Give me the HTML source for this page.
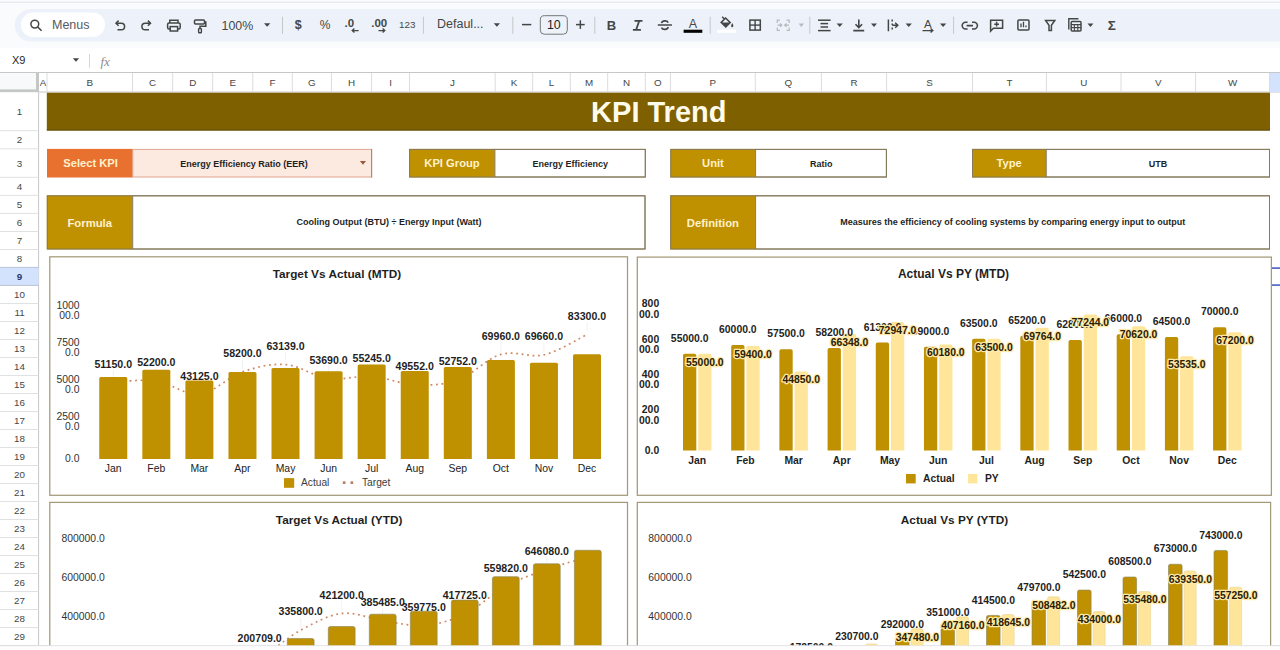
<!DOCTYPE html>
<html><head><meta charset="utf-8"><title>KPI Trend</title>
<style>
html,body{margin:0;padding:0;background:#fff;width:1280px;height:650px;overflow:hidden;}
svg{display:block;font-family:"Liberation Sans", sans-serif;}
</style></head><body>
<svg width="1280" height="650" viewBox="0 0 1280 650">
<rect x="0.00" y="0.00" width="1280.00" height="48.00" fill="#f9fbfd" />
<line x1="0.00" y1="2.20" x2="1280.00" y2="2.20" stroke="#e3e6ea" stroke-width="1" />
<path d="M31 9 H1280 V41.5 H31 A16.25 16.25 0 0 1 31 9 Z" fill="#edf2fa"/>
<rect x="21.00" y="12.50" width="84.00" height="24.50" fill="#ffffff" rx="12.25" />
<circle cx="34.8" cy="24.1" r="3.9" fill="none" stroke="#444746" stroke-width="1.5"/>
<line x1="37.70" y1="27.00" x2="41.60" y2="30.80" stroke="#444746" stroke-width="1.6" />
<text x="52.00" y="28.60" font-size="12.5" fill="#575a5e" text-anchor="start" >Menus</text>
<path d="M116 23.2 H121.3 A3.3 3.3 0 0 1 121.3 29.8 H117.5" fill="none" stroke="#444746" stroke-width="1.5"/>
<path d="M118.6 20.6 L116 23.2 L118.6 25.8" fill="none" stroke="#444746" stroke-width="1.5"/>
<path d="M150.5 23.2 H145.2 A3.3 3.3 0 0 0 145.2 29.8 H149" fill="none" stroke="#444746" stroke-width="1.5"/>
<path d="M147.9 20.6 L150.5 23.2 L147.9 25.8" fill="none" stroke="#444746" stroke-width="1.5"/>
<path d="M169.8 23 V20.2 H178 V23" fill="none" stroke="#444746" stroke-width="1.5"/>
<rect x="167.6" y="23" width="12.6" height="6" rx="1.5" fill="none" stroke="#444746" stroke-width="1.5"/>
<rect x="170.2" y="26.6" width="7.4" height="4.4" fill="#edf2fa" stroke="#444746" stroke-width="1.5"/>
<rect x="194.5" y="20" width="10" height="4" rx="1" fill="none" stroke="#444746" stroke-width="1.5"/>
<path d="M204.5 22 H205.8 V26.2 H200 V28.5" fill="none" stroke="#444746" stroke-width="1.5"/>
<rect x="198.6" y="28.5" width="2.8" height="4.2" rx="0.8" fill="none" stroke="#444746" stroke-width="1.4"/>
<text x="221.50" y="29.60" font-size="12.4" fill="#444746" text-anchor="start" >100%</text>
<path d="M264 23.2 H270.3 L267.15 26.7 Z" fill="#444746"/>
<line x1="282.50" y1="16.70" x2="282.50" y2="33.90" stroke="#c7c7c7" stroke-width="1" />
<text x="298.20" y="28.60" font-size="12.5" fill="#444746" text-anchor="middle" font-weight="bold">$</text>
<text x="325.00" y="28.60" font-size="12" fill="#444746" text-anchor="middle" >%</text>
<text x="344.60" y="27.40" font-size="11.5" fill="#444746" text-anchor="start" font-weight="bold">.0</text>
<path d="M358.6 30.6 H352.2 M354.4 28.6 L352.2 30.6 L354.4 32.6" fill="none" stroke="#444746" stroke-width="1.3"/>
<text x="371.20" y="27.40" font-size="11.5" fill="#444746" text-anchor="start" font-weight="bold">.00</text>
<path d="M378.5 30.6 H384.8 M382.6 28.6 L384.8 30.6 L382.6 32.6" fill="none" stroke="#444746" stroke-width="1.3"/>
<text x="399.00" y="27.70" font-size="9.8" fill="#444746" text-anchor="start" >123</text>
<line x1="423.40" y1="16.70" x2="423.40" y2="33.90" stroke="#c7c7c7" stroke-width="1" />
<text x="437.00" y="28.20" font-size="12.5" fill="#444746" text-anchor="start" >Defaul...</text>
<path d="M493.75 23.2 H500 L496.875 26.7 Z" fill="#444746"/>
<line x1="512.80" y1="16.70" x2="512.80" y2="33.90" stroke="#c7c7c7" stroke-width="1" />
<line x1="522.00" y1="24.60" x2="531.30" y2="24.60" stroke="#444746" stroke-width="1.5" />
<rect x="540.3" y="15.7" width="27" height="18.5" rx="4" fill="none" stroke="#747775" stroke-width="1"/>
<text x="553.80" y="29.20" font-size="12.4" fill="#1f1f1f" text-anchor="middle" >10</text>
<line x1="576.00" y1="24.60" x2="584.70" y2="24.60" stroke="#444746" stroke-width="1.5" />
<line x1="580.35" y1="20.30" x2="580.35" y2="28.90" stroke="#444746" stroke-width="1.5" />
<line x1="594.80" y1="16.70" x2="594.80" y2="33.90" stroke="#c7c7c7" stroke-width="1" />
<text x="611.40" y="30.10" font-size="13" font-weight="bold" fill="#444746" text-anchor="middle" >B</text>
<path d="M634.5 20.8 H642.5 M632.9 29.8 H640.9 M639.3 20.8 L636.1 29.8" fill="none" stroke="#444746" stroke-width="1.8"/>
<line x1="657.80" y1="25.00" x2="671.90" y2="25.00" stroke="#444746" stroke-width="1.5" />
<path d="M661.5 23.2 A3.5 2.8 0 0 1 668.2 22.6 M668.2 27.0 A3.5 2.8 0 0 1 661.5 27.6" fill="none" stroke="#444746" stroke-width="1.6"/>
<text x="693.00" y="28.40" font-size="12.5" fill="#444746" text-anchor="middle" >A</text>
<rect x="683.60" y="29.70" width="18.70" height="3.10" fill="#000000" />
<line x1="710.20" y1="16.70" x2="710.20" y2="33.90" stroke="#c7c7c7" stroke-width="1" />
<path d="M722.2 16.8 L724.4 19.0 M721.2 22.4 L725.6 18.0 L730.2 22.6 L725.8 27.0 Z" fill="none" stroke="#444746" stroke-width="1.5"/>
<path d="M721.5 22.6 H730 L725.8 26.8 Z" fill="#444746"/>
<path d="M732.2 23.0 Q733.8 25.2 733.2 26.2 A1 1 0 0 1 731.2 26.2 Q730.8 25.2 732.2 23.0 Z" fill="#444746"/>
<rect x="717.00" y="29.70" width="19.00" height="3.10" fill="#ffffff" />
<rect x="749.9" y="20.1" width="10.4" height="10.0" fill="none" stroke="#444746" stroke-width="1.5"/>
<line x1="755.10" y1="20.10" x2="755.10" y2="30.10" stroke="#444746" stroke-width="1.4" />
<line x1="749.90" y1="25.10" x2="760.30" y2="25.10" stroke="#444746" stroke-width="1.4" />
<path d="M777.3 23 V20.2 H780 M777.3 27.5 V30.3 H780 M789.2 23 V20.2 H786.5 M789.2 27.5 V30.3 H786.5 M777.5 25.2 H781.5 M780 23.5 L781.8 25.2 L780 26.9 M789 25.2 H785 M786.5 23.5 L784.7 25.2 L786.5 26.9" fill="none" stroke="#b8bbbe" stroke-width="1.3"/>
<path d="M798.6 23.4 H804 L801.3 26.9 Z" fill="#b8bbbe"/>
<line x1="809.80" y1="16.70" x2="809.80" y2="33.90" stroke="#c7c7c7" stroke-width="1" />
<line x1="818.00" y1="20.20" x2="830.60" y2="20.20" stroke="#444746" stroke-width="1.5" />
<line x1="820.50" y1="23.60" x2="828.10" y2="23.60" stroke="#444746" stroke-width="1.5" />
<line x1="820.50" y1="27.00" x2="828.10" y2="27.00" stroke="#444746" stroke-width="1.5" />
<line x1="818.00" y1="30.60" x2="830.60" y2="30.60" stroke="#444746" stroke-width="1.5" />
<path d="M836.6 23.4 H842.8 L839.7 26.9 Z" fill="#444746"/>
<path d="M858.8 19.4 V27.2 M855.5 24.2 L858.8 27.5 L862.1 24.2 M853.3 30.6 H864.2" fill="none" stroke="#444746" stroke-width="1.6"/>
<path d="M871 23.4 H877 L874.0 26.9 Z" fill="#444746"/>
<path d="M888.4 19.6 V31.2 M892.2 19.6 V21.6 M892.2 23.6 V25 M892.2 27.4 V29.4 M892.2 25.3 H897.6 M895.2 22.8 L897.8 25.3 L895.2 27.8" fill="none" stroke="#444746" stroke-width="1.5"/>
<path d="M905.6 23.4 H911.9 L908.75 26.9 Z" fill="#444746"/>
<text x="927.80" y="28.00" font-size="11.5" fill="#444746" text-anchor="middle" >A</text>
<path d="M922.5 30.6 H932.8 M930.6 28.6 L932.8 30.6 L930.6 32.6" fill="none" stroke="#444746" stroke-width="1.4"/>
<path d="M940 23.4 H946.25 L943.125 26.9 Z" fill="#444746"/>
<line x1="953.60" y1="16.70" x2="953.60" y2="33.90" stroke="#c7c7c7" stroke-width="1" />
<path d="M967.6 22.2 H965.6 A3.4 3.4 0 0 0 965.6 29 H967.6 M972 22.2 H974 A3.4 3.4 0 0 1 974 29 H972 M966.6 25.6 H973" fill="none" stroke="#444746" stroke-width="1.6"/>
<path d="M990.6 31.2 V20.2 H1002.6 V28.2 H993.4 Z" fill="none" stroke="#444746" stroke-width="1.5"/>
<path d="M996.6 21.8 V26.6 M994.2 24.2 H999" fill="none" stroke="#444746" stroke-width="1.5"/>
<rect x="1017.9" y="20.1" width="11.1" height="10.0" rx="1" fill="none" stroke="#444746" stroke-width="1.5"/>
<path d="M1021 27.2 V23.6 M1023.5 27.2 V21.8 M1026 27.2 V25.4" fill="none" stroke="#444746" stroke-width="1.3"/>
<path d="M1045.6 20.4 H1054.8 L1051.4 25.2 V30.4 H1049 V25.2 Z" fill="none" stroke="#444746" stroke-width="1.5"/>
<path d="M1068.8 29.5 V18.8 H1078.4" fill="none" stroke="#444746" stroke-width="1.4"/>
<rect x="1071.2" y="21.4" width="9.8" height="9.6" rx="1" fill="none" stroke="#444746" stroke-width="1.5"/>
<path d="M1071.2 24.6 H1081 M1071.2 27.6 H1081 M1074.4 24.6 V31 M1077.8 24.6 V31" fill="none" stroke="#444746" stroke-width="1.1"/>
<path d="M1087.5 23.4 H1093.4 L1090.45 26.9 Z" fill="#444746"/>
<text x="1111.70" y="30.20" font-size="13.5" font-weight="bold" fill="#444746" text-anchor="middle" >Σ</text>
<rect x="0.00" y="48.00" width="1280.00" height="24.30" fill="#ffffff" />
<text x="12.00" y="63.60" font-size="11" fill="#1f1f1f" text-anchor="start" >X9</text>
<path d="M72.8 58.2 H79.1 L75.95 61.7 Z" fill="#444746"/>
<line x1="89.50" y1="54.00" x2="89.50" y2="67.70" stroke="#d5d5d5" stroke-width="1" />
<text x="100.4" y="65.6" font-family="Liberation Serif" font-style="italic" font-size="13" fill="#8a8a8a">fx</text>
<rect x="39.00" y="72.30" width="1241.00" height="20.10" fill="#ffffff" />
<line x1="0.00" y1="72.50" x2="1280.00" y2="72.50" stroke="#c7c7c7" stroke-width="1" />
<line x1="39.00" y1="92.00" x2="1280.00" y2="92.00" stroke="#c7c7c7" stroke-width="1" />
<rect x="1269.50" y="73.00" width="10.50" height="19.00" fill="#d3e3fd" />
<text x="43.00" y="86.10" font-size="9.8" fill="#444746" text-anchor="middle" >A</text>
<line x1="47.00" y1="73.00" x2="47.00" y2="92.00" stroke="#dadce0" stroke-width="1" />
<text x="89.75" y="86.10" font-size="9.8" fill="#444746" text-anchor="middle" >B</text>
<line x1="132.50" y1="73.00" x2="132.50" y2="92.00" stroke="#dadce0" stroke-width="1" />
<text x="152.60" y="86.10" font-size="9.8" fill="#444746" text-anchor="middle" >C</text>
<line x1="172.70" y1="73.00" x2="172.70" y2="92.00" stroke="#dadce0" stroke-width="1" />
<text x="192.70" y="86.10" font-size="9.8" fill="#444746" text-anchor="middle" >D</text>
<line x1="212.70" y1="73.00" x2="212.70" y2="92.00" stroke="#dadce0" stroke-width="1" />
<text x="232.75" y="86.10" font-size="9.8" fill="#444746" text-anchor="middle" >E</text>
<line x1="252.80" y1="73.00" x2="252.80" y2="92.00" stroke="#dadce0" stroke-width="1" />
<text x="272.55" y="86.10" font-size="9.8" fill="#444746" text-anchor="middle" >F</text>
<line x1="292.30" y1="73.00" x2="292.30" y2="92.00" stroke="#dadce0" stroke-width="1" />
<text x="311.85" y="86.10" font-size="9.8" fill="#444746" text-anchor="middle" >G</text>
<line x1="331.40" y1="73.00" x2="331.40" y2="92.00" stroke="#dadce0" stroke-width="1" />
<text x="351.50" y="86.10" font-size="9.8" fill="#444746" text-anchor="middle" >H</text>
<line x1="371.60" y1="73.00" x2="371.60" y2="92.00" stroke="#dadce0" stroke-width="1" />
<text x="390.55" y="86.10" font-size="9.8" fill="#444746" text-anchor="middle" >I</text>
<line x1="409.50" y1="73.00" x2="409.50" y2="92.00" stroke="#dadce0" stroke-width="1" />
<text x="452.35" y="86.10" font-size="9.8" fill="#444746" text-anchor="middle" >J</text>
<line x1="495.20" y1="73.00" x2="495.20" y2="92.00" stroke="#dadce0" stroke-width="1" />
<text x="513.95" y="86.10" font-size="9.8" fill="#444746" text-anchor="middle" >K</text>
<line x1="532.70" y1="73.00" x2="532.70" y2="92.00" stroke="#dadce0" stroke-width="1" />
<text x="551.50" y="86.10" font-size="9.8" fill="#444746" text-anchor="middle" >L</text>
<line x1="570.30" y1="73.00" x2="570.30" y2="92.00" stroke="#dadce0" stroke-width="1" />
<text x="589.00" y="86.10" font-size="9.8" fill="#444746" text-anchor="middle" >M</text>
<line x1="607.70" y1="73.00" x2="607.70" y2="92.00" stroke="#dadce0" stroke-width="1" />
<text x="626.50" y="86.10" font-size="9.8" fill="#444746" text-anchor="middle" >N</text>
<line x1="645.30" y1="73.00" x2="645.30" y2="92.00" stroke="#dadce0" stroke-width="1" />
<text x="657.85" y="86.10" font-size="9.8" fill="#444746" text-anchor="middle" >O</text>
<line x1="670.40" y1="73.00" x2="670.40" y2="92.00" stroke="#dadce0" stroke-width="1" />
<text x="712.85" y="86.10" font-size="9.8" fill="#444746" text-anchor="middle" >P</text>
<line x1="755.30" y1="73.00" x2="755.30" y2="92.00" stroke="#dadce0" stroke-width="1" />
<text x="788.35" y="86.10" font-size="9.8" fill="#444746" text-anchor="middle" >Q</text>
<line x1="821.40" y1="73.00" x2="821.40" y2="92.00" stroke="#dadce0" stroke-width="1" />
<text x="854.00" y="86.10" font-size="9.8" fill="#444746" text-anchor="middle" >R</text>
<line x1="886.60" y1="73.00" x2="886.60" y2="92.00" stroke="#dadce0" stroke-width="1" />
<text x="929.55" y="86.10" font-size="9.8" fill="#444746" text-anchor="middle" >S</text>
<line x1="972.50" y1="73.00" x2="972.50" y2="92.00" stroke="#dadce0" stroke-width="1" />
<text x="1009.45" y="86.10" font-size="9.8" fill="#444746" text-anchor="middle" >T</text>
<line x1="1046.40" y1="73.00" x2="1046.40" y2="92.00" stroke="#dadce0" stroke-width="1" />
<text x="1083.70" y="86.10" font-size="9.8" fill="#444746" text-anchor="middle" >U</text>
<line x1="1121.00" y1="73.00" x2="1121.00" y2="92.00" stroke="#dadce0" stroke-width="1" />
<text x="1158.30" y="86.10" font-size="9.8" fill="#444746" text-anchor="middle" >V</text>
<line x1="1195.60" y1="73.00" x2="1195.60" y2="92.00" stroke="#dadce0" stroke-width="1" />
<text x="1232.55" y="86.10" font-size="9.8" fill="#444746" text-anchor="middle" >W</text>
<line x1="1269.50" y1="73.00" x2="1269.50" y2="92.00" stroke="#dadce0" stroke-width="1" />
<rect x="0.00" y="73.00" width="36.00" height="16.40" fill="#f8f9fa" />
<rect x="36.00" y="73.00" width="3.00" height="19.40" fill="#c4c7c5" />
<rect x="0.00" y="89.40" width="39.00" height="3.00" fill="#c4c7c5" />
<rect x="0.00" y="92.40" width="38.50" height="553.10" fill="#ffffff" />
<line x1="38.60" y1="92.40" x2="38.60" y2="645.50" stroke="#c7c7c7" stroke-width="1" />
<rect x="0.00" y="267.40" width="38.50" height="18.00" fill="#d3e3fd" />
<line x1="0.00" y1="130.70" x2="38.50" y2="130.70" stroke="#dfe1e3" stroke-width="1" />
<text x="19.50" y="115.05" font-size="9.8" fill="#444746" text-anchor="middle" >1</text>
<line x1="0.00" y1="148.80" x2="38.50" y2="148.80" stroke="#dfe1e3" stroke-width="1" />
<text x="19.50" y="143.25" font-size="9.8" fill="#444746" text-anchor="middle" >2</text>
<line x1="0.00" y1="177.30" x2="38.50" y2="177.30" stroke="#dfe1e3" stroke-width="1" />
<text x="19.50" y="166.55" font-size="9.8" fill="#444746" text-anchor="middle" >3</text>
<line x1="0.00" y1="195.40" x2="38.50" y2="195.40" stroke="#dfe1e3" stroke-width="1" />
<text x="19.50" y="189.85" font-size="9.8" fill="#444746" text-anchor="middle" >4</text>
<line x1="0.00" y1="213.40" x2="38.50" y2="213.40" stroke="#dfe1e3" stroke-width="1" />
<text x="19.50" y="207.90" font-size="9.8" fill="#444746" text-anchor="middle" >5</text>
<line x1="0.00" y1="231.50" x2="38.50" y2="231.50" stroke="#dfe1e3" stroke-width="1" />
<text x="19.50" y="225.95" font-size="9.8" fill="#444746" text-anchor="middle" >6</text>
<line x1="0.00" y1="249.50" x2="38.50" y2="249.50" stroke="#dfe1e3" stroke-width="1" />
<text x="19.50" y="244.00" font-size="9.8" fill="#444746" text-anchor="middle" >7</text>
<line x1="0.00" y1="267.40" x2="38.50" y2="267.40" stroke="#b9c3d6" stroke-width="1" />
<text x="19.50" y="261.95" font-size="9.8" fill="#444746" text-anchor="middle" >8</text>
<line x1="0.00" y1="285.40" x2="38.50" y2="285.40" stroke="#b9c3d6" stroke-width="1" />
<text x="19.50" y="279.90" font-size="9.8" fill="#233a6e" text-anchor="middle" font-weight="bold">9</text>
<line x1="0.00" y1="303.50" x2="38.50" y2="303.50" stroke="#dfe1e3" stroke-width="1" />
<text x="19.50" y="297.95" font-size="9.8" fill="#444746" text-anchor="middle" >10</text>
<line x1="0.00" y1="321.50" x2="38.50" y2="321.50" stroke="#dfe1e3" stroke-width="1" />
<text x="19.50" y="316.00" font-size="9.8" fill="#444746" text-anchor="middle" >11</text>
<line x1="0.00" y1="339.50" x2="38.50" y2="339.50" stroke="#dfe1e3" stroke-width="1" />
<text x="19.50" y="334.00" font-size="9.8" fill="#444746" text-anchor="middle" >12</text>
<line x1="0.00" y1="357.50" x2="38.50" y2="357.50" stroke="#dfe1e3" stroke-width="1" />
<text x="19.50" y="352.00" font-size="9.8" fill="#444746" text-anchor="middle" >13</text>
<line x1="0.00" y1="375.50" x2="38.50" y2="375.50" stroke="#dfe1e3" stroke-width="1" />
<text x="19.50" y="370.00" font-size="9.8" fill="#444746" text-anchor="middle" >14</text>
<line x1="0.00" y1="393.50" x2="38.50" y2="393.50" stroke="#dfe1e3" stroke-width="1" />
<text x="19.50" y="388.00" font-size="9.8" fill="#444746" text-anchor="middle" >15</text>
<line x1="0.00" y1="411.50" x2="38.50" y2="411.50" stroke="#dfe1e3" stroke-width="1" />
<text x="19.50" y="406.00" font-size="9.8" fill="#444746" text-anchor="middle" >16</text>
<line x1="0.00" y1="429.50" x2="38.50" y2="429.50" stroke="#dfe1e3" stroke-width="1" />
<text x="19.50" y="424.00" font-size="9.8" fill="#444746" text-anchor="middle" >17</text>
<line x1="0.00" y1="447.50" x2="38.50" y2="447.50" stroke="#dfe1e3" stroke-width="1" />
<text x="19.50" y="442.00" font-size="9.8" fill="#444746" text-anchor="middle" >18</text>
<line x1="0.00" y1="465.50" x2="38.50" y2="465.50" stroke="#dfe1e3" stroke-width="1" />
<text x="19.50" y="460.00" font-size="9.8" fill="#444746" text-anchor="middle" >19</text>
<line x1="0.00" y1="483.50" x2="38.50" y2="483.50" stroke="#dfe1e3" stroke-width="1" />
<text x="19.50" y="478.00" font-size="9.8" fill="#444746" text-anchor="middle" >20</text>
<line x1="0.00" y1="501.50" x2="38.50" y2="501.50" stroke="#dfe1e3" stroke-width="1" />
<text x="19.50" y="496.00" font-size="9.8" fill="#444746" text-anchor="middle" >21</text>
<line x1="0.00" y1="519.50" x2="38.50" y2="519.50" stroke="#dfe1e3" stroke-width="1" />
<text x="19.50" y="514.00" font-size="9.8" fill="#444746" text-anchor="middle" >22</text>
<line x1="0.00" y1="537.50" x2="38.50" y2="537.50" stroke="#dfe1e3" stroke-width="1" />
<text x="19.50" y="532.00" font-size="9.8" fill="#444746" text-anchor="middle" >23</text>
<line x1="0.00" y1="555.50" x2="38.50" y2="555.50" stroke="#dfe1e3" stroke-width="1" />
<text x="19.50" y="550.00" font-size="9.8" fill="#444746" text-anchor="middle" >24</text>
<line x1="0.00" y1="573.50" x2="38.50" y2="573.50" stroke="#dfe1e3" stroke-width="1" />
<text x="19.50" y="568.00" font-size="9.8" fill="#444746" text-anchor="middle" >25</text>
<line x1="0.00" y1="591.50" x2="38.50" y2="591.50" stroke="#dfe1e3" stroke-width="1" />
<text x="19.50" y="586.00" font-size="9.8" fill="#444746" text-anchor="middle" >26</text>
<line x1="0.00" y1="609.50" x2="38.50" y2="609.50" stroke="#dfe1e3" stroke-width="1" />
<text x="19.50" y="604.00" font-size="9.8" fill="#444746" text-anchor="middle" >27</text>
<line x1="0.00" y1="627.50" x2="38.50" y2="627.50" stroke="#dfe1e3" stroke-width="1" />
<text x="19.50" y="622.00" font-size="9.8" fill="#444746" text-anchor="middle" >28</text>
<line x1="0.00" y1="645.50" x2="38.50" y2="645.50" stroke="#dfe1e3" stroke-width="1" />
<text x="19.50" y="640.00" font-size="9.8" fill="#444746" text-anchor="middle" >29</text>
<rect x="0.00" y="645.50" width="1280.00" height="4.50" fill="#fdfdfd" />
<line x1="0.00" y1="645.60" x2="1280.00" y2="645.60" stroke="#dadce0" stroke-width="1" />
<rect x="46.80" y="92.70" width="1223.20" height="37.80" fill="#7f6000" />
<line x1="46.80" y1="130.00" x2="1270.00" y2="130.00" stroke="#5e4a0a" stroke-width="1" />
<text x="658.80" y="122.20" font-size="29" font-weight="bold" fill="#fffbea" text-anchor="middle" >KPI Trend</text>
<rect x="47.00" y="148.90" width="85.80" height="28.60" fill="#e9712f" />
<rect x="132.80" y="149.40" width="238.70" height="27.60" fill="#fce9e0" stroke="#e0a48e" stroke-width="1" />
<line x1="371.60" y1="148.90" x2="371.60" y2="177.50" stroke="#a88a7a" stroke-width="1.2" />
<text x="90.60" y="167.30" font-size="11.2" font-weight="bold" fill="#fff2cc" text-anchor="middle" >Select KPI</text>
<text x="243.90" y="167.00" font-size="9" font-weight="bold" fill="#1f1f1f" text-anchor="middle" >Energy Efficiency Ratio (EER)</text>
<path d="M359.9 161.0 H366.0 L362.95 164.8 Z" fill="#9a5a3a"/>
<rect x="409.10" y="148.90" width="85.80" height="28.60" fill="#bf9000" />
<rect x="494.90" y="149.40" width="150.40" height="27.60" fill="#ffffff" stroke="#857b5c" stroke-width="1" />
<rect x="409.60" y="149.40" width="235.70" height="27.60" fill="none" stroke="#857b5c" stroke-width="1" />
<text x="452.00" y="167.30" font-size="11.2" font-weight="bold" fill="#fff2cc" text-anchor="middle" >KPI Group</text>
<text x="570.35" y="167.00" font-size="9" font-weight="bold" fill="#1f1f1f" text-anchor="middle" >Energy Efficiency</text>
<rect x="670.30" y="148.90" width="85.30" height="28.60" fill="#bf9000" />
<rect x="755.60" y="149.40" width="130.80" height="27.60" fill="#ffffff" stroke="#857b5c" stroke-width="1" />
<rect x="670.80" y="149.40" width="215.60" height="27.60" fill="none" stroke="#857b5c" stroke-width="1" />
<text x="712.95" y="167.30" font-size="11.2" font-weight="bold" fill="#fff2cc" text-anchor="middle" >Unit</text>
<text x="821.25" y="167.00" font-size="9" font-weight="bold" fill="#1f1f1f" text-anchor="middle" >Ratio</text>
<rect x="972.00" y="148.90" width="74.25" height="28.60" fill="#bf9000" />
<rect x="1046.25" y="149.40" width="223.25" height="27.60" fill="#ffffff" stroke="#857b5c" stroke-width="1" />
<rect x="972.50" y="149.40" width="297.00" height="27.60" fill="none" stroke="#857b5c" stroke-width="1" />
<text x="1009.12" y="167.30" font-size="11.2" font-weight="bold" fill="#fff2cc" text-anchor="middle" >Type</text>
<text x="1158.12" y="167.00" font-size="9" font-weight="bold" fill="#1f1f1f" text-anchor="middle" >UTB</text>
<rect x="46.80" y="195.30" width="85.90" height="54.20" fill="#bf9000" />
<rect x="132.70" y="195.80" width="512.30" height="53.20" fill="#ffffff" stroke="#857b5c" stroke-width="1" />
<rect x="47.30" y="195.80" width="597.70" height="53.20" fill="none" stroke="#857b5c" stroke-width="1" />
<text x="89.75" y="226.60" font-size="11.3" font-weight="bold" fill="#fff2cc" text-anchor="middle" >Formula</text>
<text x="389.10" y="225.40" font-size="9" font-weight="bold" fill="#1f1f1f" text-anchor="middle" >Cooling Output (BTU) ÷ Energy Input (Watt)</text>
<rect x="670.20" y="195.30" width="85.40" height="54.20" fill="#bf9000" />
<rect x="755.60" y="195.80" width="513.90" height="53.20" fill="#ffffff" stroke="#857b5c" stroke-width="1" />
<rect x="670.70" y="195.80" width="598.80" height="53.20" fill="none" stroke="#857b5c" stroke-width="1" />
<text x="712.90" y="226.60" font-size="11.3" font-weight="bold" fill="#fff2cc" text-anchor="middle" >Definition</text>
<text x="1012.80" y="225.40" font-size="9" font-weight="bold" fill="#1f1f1f" text-anchor="middle" >Measures the efficiency of cooling systems by comparing energy input to output</text>
<line x1="1272.00" y1="268.10" x2="1280.00" y2="268.10" stroke="#5068c4" stroke-width="1.7" />
<line x1="1272.00" y1="285.10" x2="1280.00" y2="285.10" stroke="#5068c4" stroke-width="1.7" />
<defs><clipPath id="clipb"><rect x="0" y="0" width="1280" height="645.2"/></clipPath></defs>
<g clip-path="url(#clipb)">
<rect x="49.80" y="256.80" width="577.70" height="238.50" fill="#ffffff" stroke="#a49a78" stroke-width="1.25" />
<rect x="637.30" y="257.10" width="634.10" height="238.20" fill="#ffffff" stroke="#a49a78" stroke-width="1.25" />
<rect x="49.80" y="502.40" width="577.70" height="197.60" fill="#ffffff" stroke="#a49a78" stroke-width="1.25" />
<rect x="637.30" y="502.40" width="633.30" height="197.60" fill="#ffffff" stroke="#a49a78" stroke-width="1.25" />
<text x="336.90" y="278.00" font-size="11.8" font-weight="bold" fill="#1f1f1f" text-anchor="middle" >Target Vs Actual (MTD)</text>
<text x="79.50" y="308.90" font-size="10.4" fill="#333333" text-anchor="end" >1000</text>
<text x="79.50" y="318.60" font-size="10.4" fill="#333333" text-anchor="end" >00.0</text>
<text x="79.50" y="346.00" font-size="10.4" fill="#333333" text-anchor="end" >7500</text>
<text x="79.50" y="355.70" font-size="10.4" fill="#333333" text-anchor="end" >0.0</text>
<text x="79.50" y="383.10" font-size="10.4" fill="#333333" text-anchor="end" >5000</text>
<text x="79.50" y="392.80" font-size="10.4" fill="#333333" text-anchor="end" >0.0</text>
<text x="79.50" y="420.20" font-size="10.4" fill="#333333" text-anchor="end" >2500</text>
<text x="79.50" y="429.90" font-size="10.4" fill="#333333" text-anchor="end" >0.0</text>
<text x="79.50" y="461.60" font-size="10.4" fill="#333333" text-anchor="end" >0.0</text>
<path d="M113.25 382.39 C120.43 382.13 141.96 378.84 156.32 380.83 C170.68 382.82 185.03 395.82 199.39 394.33 C213.75 392.84 228.10 376.86 242.46 371.90 C256.82 366.93 271.17 363.43 285.53 364.55 C299.89 365.67 314.24 376.65 328.60 378.61 C342.96 380.57 357.31 375.27 371.67 376.30 C386.03 377.32 400.38 384.15 414.74 384.77 C429.10 385.38 443.45 385.07 457.81 380.01 C472.17 374.94 486.52 358.59 500.88 354.40 C515.24 350.21 529.59 358.15 543.95 354.85 C558.31 351.54 579.84 337.93 587.02 334.55" fill="none" stroke="#cf8760" stroke-width="1.7" stroke-dasharray="1.8 3.7"/>
<line x1="113.25" y1="369.89" x2="113.25" y2="379.39" stroke="#efefef" stroke-width="0.8" />
<line x1="156.32" y1="368.33" x2="156.32" y2="377.83" stroke="#efefef" stroke-width="0.8" />
<line x1="199.39" y1="381.83" x2="199.39" y2="391.33" stroke="#efefef" stroke-width="0.8" />
<line x1="242.46" y1="359.40" x2="242.46" y2="368.90" stroke="#efefef" stroke-width="0.8" />
<line x1="285.53" y1="352.05" x2="285.53" y2="361.55" stroke="#efefef" stroke-width="0.8" />
<line x1="328.60" y1="366.11" x2="328.60" y2="375.61" stroke="#efefef" stroke-width="0.8" />
<line x1="371.67" y1="363.80" x2="371.67" y2="373.30" stroke="#efefef" stroke-width="0.8" />
<line x1="414.74" y1="372.27" x2="414.74" y2="381.77" stroke="#efefef" stroke-width="0.8" />
<line x1="457.81" y1="367.51" x2="457.81" y2="377.01" stroke="#efefef" stroke-width="0.8" />
<line x1="500.88" y1="341.90" x2="500.88" y2="351.40" stroke="#efefef" stroke-width="0.8" />
<line x1="543.95" y1="342.35" x2="543.95" y2="351.85" stroke="#efefef" stroke-width="0.8" />
<line x1="587.02" y1="322.05" x2="587.02" y2="331.55" stroke="#efefef" stroke-width="0.8" />
<path d="M99.25 459.00 V378.60 Q99.25 377.10 100.75 377.10 H125.75 Q127.25 377.10 127.25 378.60 V459.00 Z" fill="#bf9000"/>
<path d="M142.32 459.00 V371.30 Q142.32 369.80 143.82 369.80 H168.82 Q170.32 369.80 170.32 371.30 V459.00 Z" fill="#bf9000"/>
<path d="M185.39 459.00 V382.10 Q185.39 380.60 186.89 380.60 H211.89 Q213.39 380.60 213.39 382.10 V459.00 Z" fill="#bf9000"/>
<path d="M228.46 459.00 V373.50 Q228.46 372.00 229.96 372.00 H254.96 Q256.46 372.00 256.46 373.50 V459.00 Z" fill="#bf9000"/>
<path d="M271.53 459.00 V369.60 Q271.53 368.10 273.03 368.10 H298.03 Q299.53 368.10 299.53 369.60 V459.00 Z" fill="#bf9000"/>
<path d="M314.60 459.00 V372.75 Q314.60 371.25 316.10 371.25 H341.10 Q342.60 371.25 342.60 372.75 V459.00 Z" fill="#bf9000"/>
<path d="M357.67 459.00 V366.10 Q357.67 364.60 359.17 364.60 H384.17 Q385.67 364.60 385.67 366.10 V459.00 Z" fill="#bf9000"/>
<path d="M400.74 459.00 V372.50 Q400.74 371.00 402.24 371.00 H427.24 Q428.74 371.00 428.74 372.50 V459.00 Z" fill="#bf9000"/>
<path d="M443.81 459.00 V368.40 Q443.81 366.90 445.31 366.90 H470.31 Q471.81 366.90 471.81 368.40 V459.00 Z" fill="#bf9000"/>
<path d="M486.88 459.00 V361.50 Q486.88 360.00 488.38 360.00 H513.38 Q514.88 360.00 514.88 361.50 V459.00 Z" fill="#bf9000"/>
<path d="M529.95 459.00 V364.30 Q529.95 362.80 531.45 362.80 H556.45 Q557.95 362.80 557.95 364.30 V459.00 Z" fill="#bf9000"/>
<path d="M573.02 459.00 V355.70 Q573.02 354.20 574.52 354.20 H599.52 Q601.02 354.20 601.02 355.70 V459.00 Z" fill="#bf9000"/>
<text x="113.25" y="367.69" font-size="10.6" font-weight="bold" fill="#1f1f1f" text-anchor="middle" >51150.0</text>
<text x="113.25" y="472.20" font-size="10.4" fill="#222222" text-anchor="middle" >Jan</text>
<text x="156.32" y="366.13" font-size="10.6" font-weight="bold" fill="#1f1f1f" text-anchor="middle" >52200.0</text>
<text x="156.32" y="472.20" font-size="10.4" fill="#222222" text-anchor="middle" >Feb</text>
<text x="199.39" y="379.63" font-size="10.6" font-weight="bold" fill="#1f1f1f" text-anchor="middle" >43125.0</text>
<text x="199.39" y="472.20" font-size="10.4" fill="#222222" text-anchor="middle" >Mar</text>
<text x="242.46" y="357.20" font-size="10.6" font-weight="bold" fill="#1f1f1f" text-anchor="middle" >58200.0</text>
<text x="242.46" y="472.20" font-size="10.4" fill="#222222" text-anchor="middle" >Apr</text>
<text x="285.53" y="349.85" font-size="10.6" font-weight="bold" fill="#1f1f1f" text-anchor="middle" >63139.0</text>
<text x="285.53" y="472.20" font-size="10.4" fill="#222222" text-anchor="middle" >May</text>
<text x="328.60" y="363.91" font-size="10.6" font-weight="bold" fill="#1f1f1f" text-anchor="middle" >53690.0</text>
<text x="328.60" y="472.20" font-size="10.4" fill="#222222" text-anchor="middle" >Jun</text>
<text x="371.67" y="361.60" font-size="10.6" font-weight="bold" fill="#1f1f1f" text-anchor="middle" >55245.0</text>
<text x="371.67" y="472.20" font-size="10.4" fill="#222222" text-anchor="middle" >Jul</text>
<text x="414.74" y="370.07" font-size="10.6" font-weight="bold" fill="#1f1f1f" text-anchor="middle" >49552.0</text>
<text x="414.74" y="472.20" font-size="10.4" fill="#222222" text-anchor="middle" >Aug</text>
<text x="457.81" y="365.31" font-size="10.6" font-weight="bold" fill="#1f1f1f" text-anchor="middle" >52752.0</text>
<text x="457.81" y="472.20" font-size="10.4" fill="#222222" text-anchor="middle" >Sep</text>
<text x="500.88" y="339.70" font-size="10.6" font-weight="bold" fill="#1f1f1f" text-anchor="middle" >69960.0</text>
<text x="500.88" y="472.20" font-size="10.4" fill="#222222" text-anchor="middle" >Oct</text>
<text x="543.95" y="340.15" font-size="10.6" font-weight="bold" fill="#1f1f1f" text-anchor="middle" >69660.0</text>
<text x="543.95" y="472.20" font-size="10.4" fill="#222222" text-anchor="middle" >Nov</text>
<text x="587.02" y="319.85" font-size="10.6" font-weight="bold" fill="#1f1f1f" text-anchor="middle" >83300.0</text>
<text x="587.02" y="472.20" font-size="10.4" fill="#222222" text-anchor="middle" >Dec</text>
<rect x="284.00" y="478.10" width="10.20" height="9.70" fill="#bf9000" />
<text x="301.00" y="485.70" font-size="10.2" fill="#3c3c3c" text-anchor="start" >Actual</text>
<rect x="342.8" y="481.3" width="2.7" height="2.7" fill="#b98262"/><rect x="350.5" y="481.3" width="2.7" height="2.7" fill="#b98262"/>
<text x="362.00" y="485.70" font-size="10.2" fill="#3c3c3c" text-anchor="start" >Target</text>
<text x="953.50" y="278.20" font-size="12.0" font-weight="bold" fill="#1f1f1f" text-anchor="middle" >Actual Vs PY (MTD)</text>
<text x="659.20" y="307.40" font-size="10.4" font-weight="bold" fill="#1f1f1f" text-anchor="end" >800</text>
<text x="659.20" y="317.90" font-size="10.4" font-weight="bold" fill="#1f1f1f" text-anchor="end" >00.0</text>
<text x="659.20" y="342.65" font-size="10.4" font-weight="bold" fill="#1f1f1f" text-anchor="end" >600</text>
<text x="659.20" y="353.15" font-size="10.4" font-weight="bold" fill="#1f1f1f" text-anchor="end" >00.0</text>
<text x="659.20" y="377.90" font-size="10.4" font-weight="bold" fill="#1f1f1f" text-anchor="end" >400</text>
<text x="659.20" y="388.40" font-size="10.4" font-weight="bold" fill="#1f1f1f" text-anchor="end" >00.0</text>
<text x="659.20" y="413.15" font-size="10.4" font-weight="bold" fill="#1f1f1f" text-anchor="end" >200</text>
<text x="659.20" y="423.65" font-size="10.4" font-weight="bold" fill="#1f1f1f" text-anchor="end" >00.0</text>
<text x="659.20" y="453.60" font-size="10.4" font-weight="bold" fill="#1f1f1f" text-anchor="end" >0.0</text>
<path d="M683.00 450.50 V355.50 Q683.00 353.70 684.80 353.70 H694.50 Q696.30 353.70 696.30 355.50 V450.50 Z" fill="#bf9000"/>
<path d="M698.20 450.50 V355.50 Q698.20 353.70 700.00 353.70 H709.70 Q711.50 353.70 711.50 355.50 V450.50 Z" fill="#ffe599"/>
<path d="M731.19 450.50 V346.70 Q731.19 344.90 732.99 344.90 H742.69 Q744.49 344.90 744.49 346.70 V450.50 Z" fill="#bf9000"/>
<path d="M746.39 450.50 V347.76 Q746.39 345.96 748.19 345.96 H757.89 Q759.69 345.96 759.69 347.76 V450.50 Z" fill="#ffe599"/>
<path d="M779.38 450.50 V351.10 Q779.38 349.30 781.18 349.30 H790.88 Q792.68 349.30 792.68 351.10 V450.50 Z" fill="#bf9000"/>
<path d="M794.58 450.50 V373.36 Q794.58 371.56 796.38 371.56 H806.08 Q807.88 371.56 807.88 373.36 V450.50 Z" fill="#ffe599"/>
<path d="M827.57 450.50 V349.87 Q827.57 348.07 829.37 348.07 H839.07 Q840.87 348.07 840.87 349.87 V450.50 Z" fill="#bf9000"/>
<path d="M842.77 450.50 V335.53 Q842.77 333.73 844.57 333.73 H854.27 Q856.07 333.73 856.07 335.53 V450.50 Z" fill="#ffe599"/>
<path d="M875.76 450.50 V344.41 Q875.76 342.61 877.56 342.61 H887.26 Q889.06 342.61 889.06 344.41 V450.50 Z" fill="#bf9000"/>
<path d="M890.96 450.50 V323.91 Q890.96 322.11 892.76 322.11 H902.46 Q904.26 322.11 904.26 323.91 V450.50 Z" fill="#ffe599"/>
<path d="M923.95 450.50 V348.46 Q923.95 346.66 925.75 346.66 H935.45 Q937.25 346.66 937.25 348.46 V450.50 Z" fill="#bf9000"/>
<path d="M939.15 450.50 V346.38 Q939.15 344.58 940.95 344.58 H950.65 Q952.45 344.58 952.45 346.38 V450.50 Z" fill="#ffe599"/>
<path d="M972.14 450.50 V340.54 Q972.14 338.74 973.94 338.74 H983.64 Q985.44 338.74 985.44 340.54 V450.50 Z" fill="#bf9000"/>
<path d="M987.34 450.50 V340.54 Q987.34 338.74 989.14 338.74 H998.84 Q1000.64 338.74 1000.64 340.54 V450.50 Z" fill="#ffe599"/>
<path d="M1020.33 450.50 V337.55 Q1020.33 335.75 1022.13 335.75 H1031.83 Q1033.63 335.75 1033.63 337.55 V450.50 Z" fill="#bf9000"/>
<path d="M1035.53 450.50 V329.52 Q1035.53 327.72 1037.33 327.72 H1047.03 Q1048.83 327.72 1048.83 329.52 V450.50 Z" fill="#ffe599"/>
<path d="M1068.52 450.50 V341.77 Q1068.52 339.97 1070.32 339.97 H1080.02 Q1081.82 339.97 1081.82 341.77 V450.50 Z" fill="#bf9000"/>
<path d="M1083.72 450.50 V316.35 Q1083.72 314.55 1085.52 314.55 H1095.22 Q1097.02 314.55 1097.02 316.35 V450.50 Z" fill="#ffe599"/>
<path d="M1116.71 450.50 V336.14 Q1116.71 334.34 1118.51 334.34 H1128.21 Q1130.01 334.34 1130.01 336.14 V450.50 Z" fill="#bf9000"/>
<path d="M1131.91 450.50 V328.01 Q1131.91 326.21 1133.71 326.21 H1143.41 Q1145.21 326.21 1145.21 328.01 V450.50 Z" fill="#ffe599"/>
<path d="M1164.90 450.50 V338.78 Q1164.90 336.98 1166.70 336.98 H1176.40 Q1178.20 336.98 1178.20 338.78 V450.50 Z" fill="#bf9000"/>
<path d="M1180.10 450.50 V358.08 Q1180.10 356.28 1181.90 356.28 H1191.60 Q1193.40 356.28 1193.40 358.08 V450.50 Z" fill="#ffe599"/>
<path d="M1213.09 450.50 V329.10 Q1213.09 327.30 1214.89 327.30 H1224.59 Q1226.39 327.30 1226.39 329.10 V450.50 Z" fill="#bf9000"/>
<path d="M1228.29 450.50 V334.03 Q1228.29 332.23 1230.09 332.23 H1239.79 Q1241.59 332.23 1241.59 334.03 V450.50 Z" fill="#ffe599"/>
<text x="689.65" y="341.80" font-size="10.4" font-weight="bold" fill="#1f1f1f" text-anchor="middle" >55000.0</text>
<text x="737.84" y="333.00" font-size="10.4" font-weight="bold" fill="#1f1f1f" text-anchor="middle" >60000.0</text>
<text x="786.03" y="337.40" font-size="10.4" font-weight="bold" fill="#1f1f1f" text-anchor="middle" >57500.0</text>
<text x="834.22" y="336.17" font-size="10.4" font-weight="bold" fill="#1f1f1f" text-anchor="middle" >58200.0</text>
<text x="882.41" y="330.71" font-size="10.4" font-weight="bold" fill="#1f1f1f" text-anchor="middle" >61300.0</text>
<text x="930.60" y="334.76" font-size="10.4" font-weight="bold" fill="#1f1f1f" text-anchor="middle" >59000.0</text>
<text x="978.79" y="326.84" font-size="10.4" font-weight="bold" fill="#1f1f1f" text-anchor="middle" >63500.0</text>
<text x="1026.98" y="323.85" font-size="10.4" font-weight="bold" fill="#1f1f1f" text-anchor="middle" >65200.0</text>
<text x="1075.17" y="328.07" font-size="10.4" font-weight="bold" fill="#1f1f1f" text-anchor="middle" >62800.0</text>
<text x="1123.36" y="322.44" font-size="10.4" font-weight="bold" fill="#1f1f1f" text-anchor="middle" >66000.0</text>
<text x="1171.55" y="325.08" font-size="10.4" font-weight="bold" fill="#1f1f1f" text-anchor="middle" >64500.0</text>
<text x="1219.74" y="315.40" font-size="10.4" font-weight="bold" fill="#1f1f1f" text-anchor="middle" >70000.0</text>
<text x="704.85" y="365.60" font-size="10.4" font-weight="bold" fill="#2a2000" text-anchor="middle" stroke="#ffe9a8" stroke-width="2.6" paint-order="stroke" stroke-linejoin="round">55000.0</text>
<text x="697.25" y="463.80" font-size="10.4" font-weight="bold" fill="#1f1f1f" text-anchor="middle" >Jan</text>
<text x="753.04" y="357.86" font-size="10.4" font-weight="bold" fill="#2a2000" text-anchor="middle" stroke="#ffe9a8" stroke-width="2.6" paint-order="stroke" stroke-linejoin="round">59400.0</text>
<text x="745.44" y="463.80" font-size="10.4" font-weight="bold" fill="#1f1f1f" text-anchor="middle" >Feb</text>
<text x="801.23" y="383.46" font-size="10.4" font-weight="bold" fill="#2a2000" text-anchor="middle" stroke="#ffe9a8" stroke-width="2.6" paint-order="stroke" stroke-linejoin="round">44850.0</text>
<text x="793.63" y="463.80" font-size="10.4" font-weight="bold" fill="#1f1f1f" text-anchor="middle" >Mar</text>
<text x="849.42" y="345.63" font-size="10.4" font-weight="bold" fill="#2a2000" text-anchor="middle" stroke="#ffe9a8" stroke-width="2.6" paint-order="stroke" stroke-linejoin="round">66348.0</text>
<text x="841.82" y="463.80" font-size="10.4" font-weight="bold" fill="#1f1f1f" text-anchor="middle" >Apr</text>
<text x="897.61" y="334.01" font-size="10.4" font-weight="bold" fill="#2a2000" text-anchor="middle" stroke="#ffe9a8" stroke-width="2.6" paint-order="stroke" stroke-linejoin="round">72947.0</text>
<text x="890.01" y="463.80" font-size="10.4" font-weight="bold" fill="#1f1f1f" text-anchor="middle" >May</text>
<text x="945.80" y="356.48" font-size="10.4" font-weight="bold" fill="#2a2000" text-anchor="middle" stroke="#ffe9a8" stroke-width="2.6" paint-order="stroke" stroke-linejoin="round">60180.0</text>
<text x="938.20" y="463.80" font-size="10.4" font-weight="bold" fill="#1f1f1f" text-anchor="middle" >Jun</text>
<text x="993.99" y="350.64" font-size="10.4" font-weight="bold" fill="#2a2000" text-anchor="middle" stroke="#ffe9a8" stroke-width="2.6" paint-order="stroke" stroke-linejoin="round">63500.0</text>
<text x="986.39" y="463.80" font-size="10.4" font-weight="bold" fill="#1f1f1f" text-anchor="middle" >Jul</text>
<text x="1042.18" y="339.62" font-size="10.4" font-weight="bold" fill="#2a2000" text-anchor="middle" stroke="#ffe9a8" stroke-width="2.6" paint-order="stroke" stroke-linejoin="round">69764.0</text>
<text x="1034.58" y="463.80" font-size="10.4" font-weight="bold" fill="#1f1f1f" text-anchor="middle" >Aug</text>
<text x="1090.37" y="326.45" font-size="10.4" font-weight="bold" fill="#2a2000" text-anchor="middle" stroke="#ffe9a8" stroke-width="2.6" paint-order="stroke" stroke-linejoin="round">77244.0</text>
<text x="1082.77" y="463.80" font-size="10.4" font-weight="bold" fill="#1f1f1f" text-anchor="middle" >Sep</text>
<text x="1138.56" y="338.11" font-size="10.4" font-weight="bold" fill="#2a2000" text-anchor="middle" stroke="#ffe9a8" stroke-width="2.6" paint-order="stroke" stroke-linejoin="round">70620.0</text>
<text x="1130.96" y="463.80" font-size="10.4" font-weight="bold" fill="#1f1f1f" text-anchor="middle" >Oct</text>
<text x="1186.75" y="368.18" font-size="10.4" font-weight="bold" fill="#2a2000" text-anchor="middle" stroke="#ffe9a8" stroke-width="2.6" paint-order="stroke" stroke-linejoin="round">53535.0</text>
<text x="1179.15" y="463.80" font-size="10.4" font-weight="bold" fill="#1f1f1f" text-anchor="middle" >Nov</text>
<text x="1234.94" y="344.13" font-size="10.4" font-weight="bold" fill="#2a2000" text-anchor="middle" stroke="#ffe9a8" stroke-width="2.6" paint-order="stroke" stroke-linejoin="round">67200.0</text>
<text x="1227.34" y="463.80" font-size="10.4" font-weight="bold" fill="#1f1f1f" text-anchor="middle" >Dec</text>
<rect x="906.00" y="474.00" width="9.70" height="9.40" fill="#bf9000" />
<text x="923.10" y="481.80" font-size="10.3" font-weight="bold" fill="#1f1f1f" text-anchor="start" >Actual</text>
<rect x="968.10" y="474.00" width="9.20" height="9.40" fill="#ffe599" />
<text x="984.90" y="481.80" font-size="10.3" font-weight="bold" fill="#1f1f1f" text-anchor="start" >PY</text>
<text x="339.10" y="524.20" font-size="11.8" font-weight="bold" fill="#1f1f1f" text-anchor="middle" >Target Vs Actual (YTD)</text>
<text x="104.80" y="541.80" font-size="10.4" fill="#333333" text-anchor="end" >800000.0</text>
<text x="104.80" y="581.00" font-size="10.4" fill="#333333" text-anchor="end" >600000.0</text>
<text x="104.80" y="620.20" font-size="10.4" fill="#333333" text-anchor="end" >400000.0</text>
<path d="M136.60 684.24 C143.44 681.95 163.95 674.11 177.62 670.52 C191.29 666.93 204.97 664.99 218.64 662.68 C232.31 660.37 245.99 662.08 259.66 656.66 C273.33 651.24 287.01 637.39 300.68 630.18 C314.35 622.98 328.03 615.07 341.70 613.44 C355.37 611.82 369.05 618.44 382.72 620.44 C396.39 622.45 410.07 626.54 423.74 625.48 C437.41 624.43 451.09 620.66 464.76 614.13 C478.43 607.59 492.11 593.73 505.78 586.28 C519.45 578.82 533.13 574.24 546.80 569.37 C560.47 564.50 580.98 559.09 587.82 557.04" fill="none" stroke="#cf8760" stroke-width="1.7" stroke-dasharray="1.8 3.7"/>
<line x1="259.66" y1="644.16" x2="259.66" y2="653.66" stroke="#efefef" stroke-width="0.8" />
<line x1="300.68" y1="617.68" x2="300.68" y2="627.18" stroke="#efefef" stroke-width="0.8" />
<line x1="341.70" y1="600.94" x2="341.70" y2="610.44" stroke="#efefef" stroke-width="0.8" />
<line x1="382.72" y1="607.94" x2="382.72" y2="617.44" stroke="#efefef" stroke-width="0.8" />
<line x1="423.74" y1="612.98" x2="423.74" y2="622.48" stroke="#efefef" stroke-width="0.8" />
<line x1="464.76" y1="601.63" x2="464.76" y2="611.13" stroke="#efefef" stroke-width="0.8" />
<line x1="505.78" y1="573.78" x2="505.78" y2="583.28" stroke="#efefef" stroke-width="0.8" />
<line x1="546.80" y1="556.87" x2="546.80" y2="566.37" stroke="#efefef" stroke-width="0.8" />
<path d="M205.24 700.00 V682.00 Q205.24 680.00 207.24 680.00 H230.04 Q232.04 680.00 232.04 682.00 V700.00 Z" fill="#bf9000" stroke="#8f8a5e" stroke-width="0.9" stroke-opacity="0.75"/>
<path d="M246.26 700.00 V662.00 Q246.26 660.00 248.26 660.00 H271.06 Q273.06 660.00 273.06 662.00 V700.00 Z" fill="#bf9000" stroke="#8f8a5e" stroke-width="0.9" stroke-opacity="0.75"/>
<path d="M287.28 700.00 V640.50 Q287.28 638.50 289.28 638.50 H312.08 Q314.08 638.50 314.08 640.50 V700.00 Z" fill="#bf9000" stroke="#8f8a5e" stroke-width="0.9" stroke-opacity="0.75"/>
<path d="M328.30 700.00 V628.50 Q328.30 626.50 330.30 626.50 H353.10 Q355.10 626.50 355.10 628.50 V700.00 Z" fill="#bf9000" stroke="#8f8a5e" stroke-width="0.9" stroke-opacity="0.75"/>
<path d="M369.32 700.00 V616.20 Q369.32 614.20 371.32 614.20 H394.12 Q396.12 614.20 396.12 616.20 V700.00 Z" fill="#bf9000" stroke="#8f8a5e" stroke-width="0.9" stroke-opacity="0.75"/>
<path d="M410.34 700.00 V613.20 Q410.34 611.20 412.34 611.20 H435.14 Q437.14 611.20 437.14 613.20 V700.00 Z" fill="#bf9000" stroke="#8f8a5e" stroke-width="0.9" stroke-opacity="0.75"/>
<path d="M451.36 700.00 V602.10 Q451.36 600.10 453.36 600.10 H476.16 Q478.16 600.10 478.16 602.10 V700.00 Z" fill="#bf9000" stroke="#8f8a5e" stroke-width="0.9" stroke-opacity="0.75"/>
<path d="M492.38 700.00 V578.70 Q492.38 576.70 494.38 576.70 H517.18 Q519.18 576.70 519.18 578.70 V700.00 Z" fill="#bf9000" stroke="#8f8a5e" stroke-width="0.9" stroke-opacity="0.75"/>
<path d="M533.40 700.00 V565.80 Q533.40 563.80 535.40 563.80 H558.20 Q560.20 563.80 560.20 565.80 V700.00 Z" fill="#bf9000" stroke="#8f8a5e" stroke-width="0.9" stroke-opacity="0.75"/>
<path d="M574.42 700.00 V552.30 Q574.42 550.30 576.42 550.30 H599.22 Q601.22 550.30 601.22 552.30 V700.00 Z" fill="#bf9000" stroke="#8f8a5e" stroke-width="0.9" stroke-opacity="0.75"/>
<text x="259.66" y="641.96" font-size="10.6" font-weight="bold" fill="#1f1f1f" text-anchor="middle" >200709.0</text>
<text x="300.68" y="615.48" font-size="10.6" font-weight="bold" fill="#1f1f1f" text-anchor="middle" >335800.0</text>
<text x="341.70" y="598.74" font-size="10.6" font-weight="bold" fill="#1f1f1f" text-anchor="middle" >421200.0</text>
<text x="382.72" y="605.74" font-size="10.6" font-weight="bold" fill="#1f1f1f" text-anchor="middle" >385485.0</text>
<text x="423.74" y="610.78" font-size="10.6" font-weight="bold" fill="#1f1f1f" text-anchor="middle" >359775.0</text>
<text x="464.76" y="599.43" font-size="10.6" font-weight="bold" fill="#1f1f1f" text-anchor="middle" >417725.0</text>
<text x="505.78" y="571.58" font-size="10.6" font-weight="bold" fill="#1f1f1f" text-anchor="middle" >559820.0</text>
<text x="546.80" y="554.67" font-size="10.6" font-weight="bold" fill="#1f1f1f" text-anchor="middle" >646080.0</text>
<text x="954.50" y="524.20" font-size="11.8" font-weight="bold" fill="#1f1f1f" text-anchor="middle" >Actual Vs PY (YTD)</text>
<text x="691.70" y="541.80" font-size="10.4" fill="#333333" text-anchor="end" >800000.0</text>
<text x="691.70" y="581.00" font-size="10.4" fill="#333333" text-anchor="end" >600000.0</text>
<text x="691.70" y="620.20" font-size="10.4" fill="#333333" text-anchor="end" >400000.0</text>
<path d="M713.50 700.00 V688.32 Q713.50 686.52 715.30 686.52 H725.30 Q727.10 686.52 727.10 688.32 V700.00 Z" fill="#bf9000" stroke="#8f8a5e" stroke-width="0.9" stroke-opacity="0.75"/>
<path d="M729.10 700.00 V688.32 Q729.10 686.52 730.90 686.52 H739.30 Q741.10 686.52 741.10 688.32 V700.00 Z" fill="#ffe599" stroke="#e8d89a" stroke-width="0.9" stroke-opacity="0.75"/>
<path d="M759.00 700.00 V676.45 Q759.00 674.65 760.80 674.65 H770.80 Q772.60 674.65 772.60 676.45 V700.00 Z" fill="#bf9000" stroke="#8f8a5e" stroke-width="0.9" stroke-opacity="0.75"/>
<path d="M774.60 700.00 V676.57 Q774.60 674.77 776.40 674.77 H784.80 Q786.60 674.77 786.60 676.57 V700.00 Z" fill="#ffe599" stroke="#e8d89a" stroke-width="0.9" stroke-opacity="0.75"/>
<path d="M804.50 700.00 V665.08 Q804.50 663.28 806.30 663.28 H816.30 Q818.10 663.28 818.10 665.08 V700.00 Z" fill="#bf9000" stroke="#8f8a5e" stroke-width="0.9" stroke-opacity="0.75"/>
<path d="M820.10 700.00 V667.70 Q820.10 665.90 821.90 665.90 H830.30 Q832.10 665.90 832.10 667.70 V700.00 Z" fill="#ffe599" stroke="#e8d89a" stroke-width="0.9" stroke-opacity="0.75"/>
<path d="M850.00 700.00 V653.57 Q850.00 651.77 851.80 651.77 H861.80 Q863.60 651.77 863.60 653.57 V700.00 Z" fill="#bf9000" stroke="#8f8a5e" stroke-width="0.9" stroke-opacity="0.75"/>
<path d="M865.60 700.00 V645.79 Q865.60 643.99 867.40 643.99 H875.80 Q877.60 643.99 877.60 645.79 V700.00 Z" fill="#ffe599" stroke="#e8d89a" stroke-width="0.9" stroke-opacity="0.75"/>
<path d="M895.50 700.00 V641.44 Q895.50 639.64 897.30 639.64 H907.30 Q909.10 639.64 909.10 641.44 V700.00 Z" fill="#bf9000" stroke="#8f8a5e" stroke-width="0.9" stroke-opacity="0.75"/>
<path d="M911.10 700.00 V630.47 Q911.10 628.67 912.90 628.67 H921.30 Q923.10 628.67 923.10 630.47 V700.00 Z" fill="#ffe599" stroke="#e8d89a" stroke-width="0.9" stroke-opacity="0.75"/>
<path d="M941.00 700.00 V629.77 Q941.00 627.97 942.80 627.97 H952.80 Q954.60 627.97 954.60 629.77 V700.00 Z" fill="#bf9000" stroke="#8f8a5e" stroke-width="0.9" stroke-opacity="0.75"/>
<path d="M956.60 700.00 V618.66 Q956.60 616.86 958.40 616.86 H966.80 Q968.60 616.86 968.60 618.66 V700.00 Z" fill="#ffe599" stroke="#e8d89a" stroke-width="0.9" stroke-opacity="0.75"/>
<path d="M986.50 700.00 V617.21 Q986.50 615.41 988.30 615.41 H998.30 Q1000.10 615.41 1000.10 617.21 V700.00 Z" fill="#bf9000" stroke="#8f8a5e" stroke-width="0.9" stroke-opacity="0.75"/>
<path d="M1002.10 700.00 V616.39 Q1002.10 614.59 1003.90 614.59 H1012.30 Q1014.10 614.59 1014.10 616.39 V700.00 Z" fill="#ffe599" stroke="#e8d89a" stroke-width="0.9" stroke-opacity="0.75"/>
<path d="M1032.00 700.00 V604.32 Q1032.00 602.52 1033.80 602.52 H1043.80 Q1045.60 602.52 1045.60 604.32 V700.00 Z" fill="#bf9000" stroke="#8f8a5e" stroke-width="0.9" stroke-opacity="0.75"/>
<path d="M1047.60 700.00 V598.62 Q1047.60 596.82 1049.40 596.82 H1057.80 Q1059.60 596.82 1059.60 598.62 V700.00 Z" fill="#ffe599" stroke="#e8d89a" stroke-width="0.9" stroke-opacity="0.75"/>
<path d="M1077.50 700.00 V591.89 Q1077.50 590.09 1079.30 590.09 H1089.30 Q1091.10 590.09 1091.10 591.89 V700.00 Z" fill="#bf9000" stroke="#8f8a5e" stroke-width="0.9" stroke-opacity="0.75"/>
<path d="M1093.10 700.00 V613.35 Q1093.10 611.55 1094.90 611.55 H1103.30 Q1105.10 611.55 1105.10 613.35 V700.00 Z" fill="#ffe599" stroke="#e8d89a" stroke-width="0.9" stroke-opacity="0.75"/>
<path d="M1123.00 700.00 V578.84 Q1123.00 577.04 1124.80 577.04 H1134.80 Q1136.60 577.04 1136.60 578.84 V700.00 Z" fill="#bf9000" stroke="#8f8a5e" stroke-width="0.9" stroke-opacity="0.75"/>
<path d="M1138.60 700.00 V593.28 Q1138.60 591.48 1140.40 591.48 H1148.80 Q1150.60 591.48 1150.60 593.28 V700.00 Z" fill="#ffe599" stroke="#e8d89a" stroke-width="0.9" stroke-opacity="0.75"/>
<path d="M1168.50 700.00 V566.08 Q1168.50 564.28 1170.30 564.28 H1180.30 Q1182.10 564.28 1182.10 566.08 V700.00 Z" fill="#bf9000" stroke="#8f8a5e" stroke-width="0.9" stroke-opacity="0.75"/>
<path d="M1184.10 700.00 V572.74 Q1184.10 570.94 1185.90 570.94 H1194.30 Q1196.10 570.94 1196.10 572.74 V700.00 Z" fill="#ffe599" stroke="#e8d89a" stroke-width="0.9" stroke-opacity="0.75"/>
<path d="M1214.00 700.00 V552.23 Q1214.00 550.43 1215.80 550.43 H1225.80 Q1227.60 550.43 1227.60 552.23 V700.00 Z" fill="#bf9000" stroke="#8f8a5e" stroke-width="0.9" stroke-opacity="0.75"/>
<path d="M1229.60 700.00 V588.98 Q1229.60 587.18 1231.40 587.18 H1239.80 Q1241.60 587.18 1241.60 588.98 V700.00 Z" fill="#ffe599" stroke="#e8d89a" stroke-width="0.9" stroke-opacity="0.75"/>
<text x="811.30" y="651.38" font-size="10.4" font-weight="bold" fill="#1f1f1f" text-anchor="middle" >172500.0</text>
<text x="856.80" y="639.87" font-size="10.4" font-weight="bold" fill="#1f1f1f" text-anchor="middle" >230700.0</text>
<text x="902.30" y="627.74" font-size="10.4" font-weight="bold" fill="#1f1f1f" text-anchor="middle" >292000.0</text>
<text x="947.80" y="616.07" font-size="10.4" font-weight="bold" fill="#1f1f1f" text-anchor="middle" >351000.0</text>
<text x="993.30" y="603.51" font-size="10.4" font-weight="bold" fill="#1f1f1f" text-anchor="middle" >414500.0</text>
<text x="1038.80" y="590.62" font-size="10.4" font-weight="bold" fill="#1f1f1f" text-anchor="middle" >479700.0</text>
<text x="1084.30" y="578.19" font-size="10.4" font-weight="bold" fill="#1f1f1f" text-anchor="middle" >542500.0</text>
<text x="1129.80" y="565.14" font-size="10.4" font-weight="bold" fill="#1f1f1f" text-anchor="middle" >608500.0</text>
<text x="1175.30" y="552.38" font-size="10.4" font-weight="bold" fill="#1f1f1f" text-anchor="middle" >673000.0</text>
<text x="1220.80" y="538.53" font-size="10.4" font-weight="bold" fill="#1f1f1f" text-anchor="middle" >743000.0</text>
<text x="917.30" y="640.57" font-size="10.4" font-weight="bold" fill="#2a2000" text-anchor="middle" stroke="#ffe9a8" stroke-width="2.6" paint-order="stroke" stroke-linejoin="round">347480.0</text>
<text x="962.80" y="628.76" font-size="10.4" font-weight="bold" fill="#2a2000" text-anchor="middle" stroke="#ffe9a8" stroke-width="2.6" paint-order="stroke" stroke-linejoin="round">407160.0</text>
<text x="1008.30" y="626.49" font-size="10.4" font-weight="bold" fill="#2a2000" text-anchor="middle" stroke="#ffe9a8" stroke-width="2.6" paint-order="stroke" stroke-linejoin="round">418645.0</text>
<text x="1053.80" y="608.72" font-size="10.4" font-weight="bold" fill="#2a2000" text-anchor="middle" stroke="#ffe9a8" stroke-width="2.6" paint-order="stroke" stroke-linejoin="round">508482.0</text>
<text x="1099.30" y="623.45" font-size="10.4" font-weight="bold" fill="#2a2000" text-anchor="middle" stroke="#ffe9a8" stroke-width="2.6" paint-order="stroke" stroke-linejoin="round">434000.0</text>
<text x="1144.80" y="603.38" font-size="10.4" font-weight="bold" fill="#2a2000" text-anchor="middle" stroke="#ffe9a8" stroke-width="2.6" paint-order="stroke" stroke-linejoin="round">535480.0</text>
<text x="1190.30" y="582.84" font-size="10.4" font-weight="bold" fill="#2a2000" text-anchor="middle" stroke="#ffe9a8" stroke-width="2.6" paint-order="stroke" stroke-linejoin="round">639350.0</text>
<text x="1235.80" y="599.08" font-size="10.4" font-weight="bold" fill="#2a2000" text-anchor="middle" stroke="#ffe9a8" stroke-width="2.6" paint-order="stroke" stroke-linejoin="round">557250.0</text>
</g>
</svg>
</body></html>
